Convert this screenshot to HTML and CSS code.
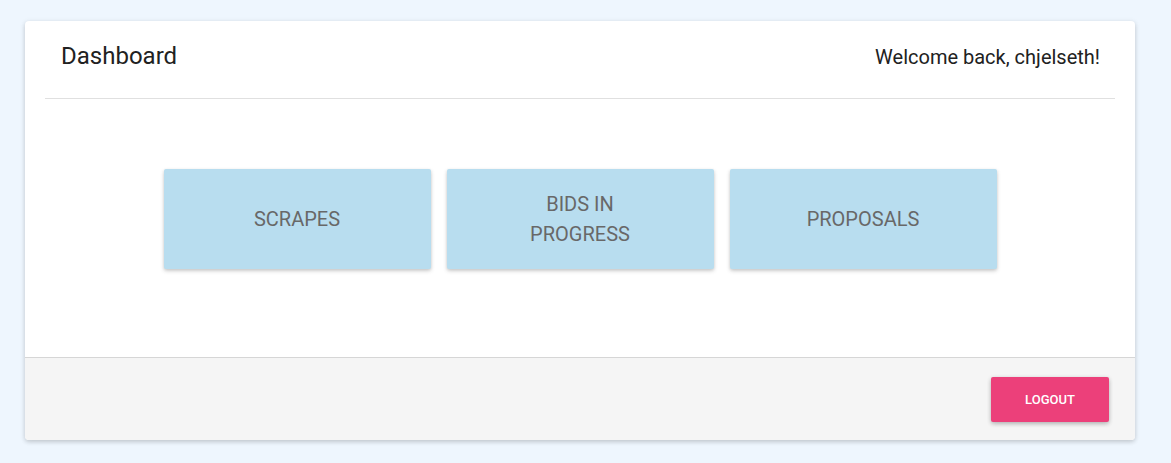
FILE: index.html
```html
<!DOCTYPE html>
<html>
<head>
<meta charset="utf-8">
<link rel="stylesheet" href="styles.css">
</head>
<body>
<div class="page">
  <div class="card">
    <div class="card-header">
      <h1 class="title">Dashboard</h1>
      <div class="welcome">Welcome back, chjelseth!</div>
    </div>
    <div class="card-body">
      <div class="tiles">
        <div class="tile"><span class="tile-label">SCRAPES</span></div>
        <div class="tile"><span class="tile-label">BIDS IN PROGRESS</span></div>
        <div class="tile"><span class="tile-label">PROPOSALS</span></div>
      </div>
    </div>
    <div class="card-footer">
      <button class="logout">LOGOUT</button>
    </div>
  </div>
</div>
</body>
</html>
```
FILE: styles.css
```css
* { box-sizing: border-box; }
html, body {
  margin: 0;
  padding: 0;
  background: #eef6fe;
  font-family: Roboto, "Liberation Sans", sans-serif;
}
.page {
  padding: 21px 36px 23px 25px;
}
.card {
  background: #ffffff;
  border-radius: 4px;
  box-shadow: 0 2px 4px rgba(0,0,0,0.14), 0 1px 6px rgba(0,0,0,0.08);
  overflow: hidden;
  display: flex;
  flex-direction: column;
}
.card-header {
  margin: 0 20px;
  padding: 0 15px 0 16px;
  height: 78px;
  border-bottom: 1px solid #e0e0e0;
  display: flex;
  align-items: center;
  justify-content: space-between;
}
.title {
  margin: 0;
  font-size: 24px;
  font-weight: 400;
  color: #212121;
  position: relative;
  top: -4px;
}
.welcome {
  font-size: 20px;
  color: #212121;
  position: relative;
  top: -3px;
}
.card-body {
  height: 259px;
  padding-top: 70px;
  border-bottom: 1px solid #d6d6d6;
}
.tiles {
  display: flex;
  justify-content: center;
  gap: 16px;
}
.tile {
  width: 267px;
  height: 100px;
  background: #b8ddef;
  border-radius: 2px;
  box-shadow: 0 2px 4px rgba(0,0,0,0.18), 0 1px 3px rgba(0,0,0,0.08);
  display: flex;
  align-items: center;
  justify-content: center;
  text-align: center;
}
.tile-label {
  max-width: 130px;
  font-size: 20px;
  line-height: 30px;
  color: #686868;
}
.card-footer {
  height: 82px;
  background: #f5f5f5;
  display: flex;
  justify-content: flex-end;
  align-items: flex-start;
  padding: 19px 26px 0 0;
}
.logout {
  width: 118px;
  height: 45px;
  border: none;
  border-radius: 2px;
  background: #ec407a;
  color: #ffffff;
  font-family: Roboto, "Liberation Sans", sans-serif;
  font-size: 13px;
  font-weight: 500;
  box-shadow: 0 2px 4px rgba(0,0,0,0.2), 0 1px 5px rgba(0,0,0,0.1);
}
```
